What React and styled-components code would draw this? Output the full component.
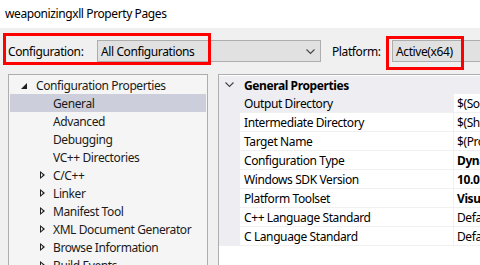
import React from "react"
import styled, { createGlobalStyle } from "styled-components"

const GlobalStyle = createGlobalStyle`
  html, body {
    margin: 0;
    padding: 0;
    background: #f0f0f0;
  }
  body {
    font-family: "Noto Sans", "Liberation Sans", sans-serif;
    font-size: 12px;
    letter-spacing: -0.4px;
    color: #000;
  }
`

const treeItems = [
  { label: "General", selected: true },
  { label: "Advanced" },
  { label: "Debugging" },
  { label: "VC++ Directories" },
  { label: "C/C++", folder: true },
  { label: "Linker", folder: true },
  { label: "Manifest Tool", folder: true },
  { label: "XML Document Generator", folder: true },
  { label: "Browse Information", folder: true },
  { label: "Build Events", folder: true },
]

const props = [
  { name: "Output Directory", value: "$(SolutionDir)$(Platform)\\$(Configuration)\\", active: true },
  { name: "Intermediate Directory", value: "$(ShortProjectName)\\$(Platform)\\" },
  { name: "Target Name", value: "$(ProjectName)" },
  { name: "Configuration Type", value: "Dynamic Library (.dll)", bold: true },
  { name: "Windows SDK Version", value: "10.0 (latest installed version)", bold: true },
  { name: "Platform Toolset", value: "Visual Studio 2019 (v142)", bold: true },
  { name: "C++ Language Standard", value: "Default (ISO C++14 Standard)" },
  { name: "C Language Standard", value: "Default (Legacy MSVC)" },
]

const Chevron = () => (
  <svg width="9" height="6" viewBox="0 0 9 6">
    <path d="M0.5 0.5 L4.5 4.5 L8.5 0.5" fill="none" stroke="#444" strokeWidth="1.1" />
  </svg>
)

export default () => (
  <Window>
    <GlobalStyle />
    <TitleBar>weaponizingxll Property Pages</TitleBar>
    <ConfigBar>
      <Label width="89px">Configuration:</Label>
      <Combo width="224px">
        All Configurations
        <Arrow>
          <Chevron />
        </Arrow>
      </Combo>
      <Label width="60px" gap="11px">Platform:</Label>
      <Combo width="200px">Active(x64)</Combo>
      <Highlight left="3px" top="33px" w="208px" h="32px" />
      <Highlight left="386px" top="36px" w="78px" h="34px" />
    </ConfigBar>
    <Main>
      <Tree>
        <TreeRow indent="11px">
          <ExpandedTri />
          <span>Configuration Properties</span>
        </TreeRow>
        {treeItems.map(item => (
          <TreeRow key={item.label} selected={item.selected} indent="29px">
            {item.folder ? <CollapsedTri /> : <TriSpace />}
            <span>{item.label}</span>
          </TreeRow>
        ))}
      </Tree>
      <Grid>
        <GridBody>
          <Gutter>
            <GutterChevron>
              <Chevron />
            </GutterChevron>
          </Gutter>
          <Rows>
            <Category>General Properties</Category>
            {props.map(p => (
              <PropRow key={p.name}>
                <PropName active={p.active}>{p.name}</PropName>
                <PropValue bold={p.bold}>{p.value}</PropValue>
              </PropRow>
            ))}
          </Rows>
        </GridBody>
      </Grid>
    </Main>
  </Window>
)

const Window = styled.div`
  width: 480px;
  height: 265px;
  overflow: hidden;
  background: #f0f0f0;
`

const TitleBar = styled.div`
  height: 28px;
  background: #fff;
  display: flex;
  align-items: center;
  padding-left: 5px;
  padding-bottom: 2px;
  box-sizing: border-box;
  white-space: nowrap;
`

const ConfigBar = styled.div`
  position: relative;
  height: 46px;
  display: flex;
  align-items: center;
  padding-left: 8px;
  white-space: nowrap;
`

const Label = styled.div`
  width: ${p => p.width};
  margin-left: ${p => p.gap || 0};
  flex: none;
`

const Combo = styled.div`
  position: relative;
  width: ${p => p.width};
  flex: none;
  height: 22px;
  box-sizing: border-box;
  border: 1px solid #adadad;
  background: #e1e1e1;
  display: flex;
  align-items: center;
  padding-left: 3px;
`

const Arrow = styled.span`
  position: absolute;
  right: 5px;
  top: 8px;
  display: flex;
`

const Highlight = styled.div`
  position: absolute;
  left: ${p => p.left};
  top: ${p => `calc(${p.top} - 28px)`};
  width: ${p => p.w};
  height: ${p => p.h};
  box-sizing: border-box;
  border: 3px solid #ff0000;
`

const Main = styled.div`
  display: flex;
  padding-left: 8px;
  gap: 10px;
  height: 191px;
`

const Tree = styled.div`
  width: 200px;
  flex: none;
  box-sizing: border-box;
  border: 1px solid #adadad;
  border-bottom: none;
  background: #f5f5f5;
  padding: 1px 1px 0;
  overflow: hidden;
`

const TreeRow = styled.div`
  height: 18px;
  display: flex;
  align-items: center;
  padding-left: ${p => p.indent};
  background: ${p => (p.selected ? "#cccedb" : "transparent")};
  white-space: nowrap;
  color: #1b1b1b;
`

const ExpandedTri = styled.span`
  width: 0;
  height: 0;
  border-left: 6px solid transparent;
  border-bottom: 6px solid #1e1e1e;
  margin-right: 9px;
  margin-top: 1px;
`

const CollapsedTri = styled.span`
  width: 4px;
  height: 8px;
  margin-right: 9px;
  margin-left: 1px;
  position: relative;
  &::before {
    content: "";
    position: absolute;
    left: 0;
    top: 0;
    border-top: 4px solid transparent;
    border-bottom: 4px solid transparent;
    border-left: 5px solid #1e1e1e;
  }
  &::after {
    content: "";
    position: absolute;
    left: 1px;
    top: 2px;
    border-top: 2px solid transparent;
    border-bottom: 2px solid transparent;
    border-left: 2.5px solid #f5f5f5;
  }
`

const TriSpace = styled.span`
  width: 14px;
`

const Grid = styled.div`
  flex: 1;
  border-left: 1px solid #adadad;
  border-top: 1px solid #adadad;
  background: #fff;
  padding-top: 1px;
  overflow: hidden;
`

const GridBody = styled.div`
  display: flex;
`

const Gutter = styled.div`
  width: 21px;
  flex: none;
  background: #eeeef2;
`

const GutterChevron = styled.div`
  height: 18px;
  display: flex;
  align-items: center;
  padding-left: 6px;
`

const Rows = styled.div`
  flex: 1;
`

const Category = styled.div`
  height: 18px;
  display: flex;
  align-items: center;
  padding-left: 4px;
  font-weight: bold;
  background: #eeeef2;
  white-space: nowrap;
`

const PropRow = styled.div`
  height: 19px;
  display: grid;
  grid-template-columns: 214px 1fr;
  border-bottom: 1px solid #f0f0f0;
  box-sizing: border-box;
  white-space: nowrap;
`

const PropName = styled.div`
  display: flex;
  align-items: center;
  padding-left: 4px;
  background: ${p => (p.active ? "#eeeef2" : "#fff")};
  border-right: 1px solid #f0f0f0;
  overflow: hidden;
`

const PropValue = styled.div`
  display: flex;
  align-items: center;
  padding-left: 3px;
  font-weight: ${p => (p.bold ? "bold" : "normal")};
  overflow: hidden;
`
